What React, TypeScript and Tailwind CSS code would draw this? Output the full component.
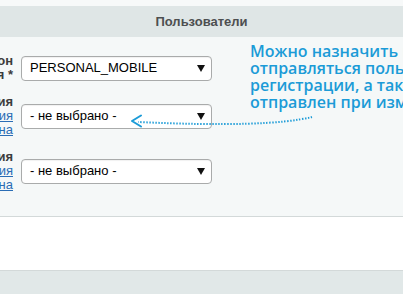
import React from "react";

function Select({ value }: { value: string }) {
  return (
    <div className="flex h-[25px] w-[191px] flex-none items-center justify-between rounded-[4px] border border-[#a9abab] bg-white pl-[8px] pr-[6px] shadow-[inset_0_1px_1px_rgba(0,0,0,0.06)]">
      <span className="text-[13px] text-black">{value}</span>
      <svg width="8" height="7" viewBox="0 0 8 7">
        <path d="M0 0 H8 L4 7 Z" fill="#111" />
      </svg>
    </div>
  );
}

function Label({ lines }: { lines: { t: string; link?: boolean }[] }) {
  return (
    <div className="ml-[-187px] flex w-[200px] flex-none flex-col items-end text-right text-[13px] leading-[14px]">
      {lines.map((l, i) => (
        <span
          key={i}
          className={
            l.link
              ? "whitespace-nowrap text-[#2a6db5] underline"
              : "whitespace-nowrap font-bold text-[#3c3c3c]"
          }
        >
          {l.t}
        </span>
      ))}
    </div>
  );
}

export default function App() {
  return (
    <div
      className="relative flex h-[294px] w-[403px] flex-col overflow-hidden bg-white"
      style={{ fontFamily: '"Liberation Sans", Arial, sans-serif' }}
    >
      <div className="h-[6px] flex-none bg-[#f7f9f9]" />
      <div className="flex h-[31px] flex-none items-center justify-center bg-[#dfe6e6] text-[13px] font-bold text-[#4d4f50]">
        Пользователи
      </div>
      <div className="flex h-[180px] flex-none border-b border-[#d3d9d9] bg-[#f5f8f8]">
        <div className="flex flex-none flex-col gap-[13px] pt-[17px]">
          <div className="flex items-center gap-[8px]">
            <Label lines={[{ t: "Поле телефон" }, { t: "пользователя *" }]} />
            <Select value="PERSONAL_MOBILE" />
          </div>
          <div className="flex items-center gap-[8px]">
            <Label
              lines={[
                { t: "Шаблон при регистрация" },
                { t: "Изменить тип события: регистрация", link: true },
                { t: "Изменить шаблон окна", link: true },
              ]}
            />
            <Select value="- не выбрано -" />
          </div>
          <div className="flex items-center gap-[8px]">
            <Label
              lines={[
                { t: "Шаблон при изменения" },
                { t: "Изменить тип события: изменения", link: true },
                { t: "Изменить шаблон окна", link: true },
              ]}
            />
            <Select value="- не выбрано -" />
          </div>
        </div>
        <div className="ml-[38px] mt-[6px] min-w-0 flex-1 overflow-hidden">
          <div
            className="flex flex-col whitespace-nowrap text-[16px] font-semibold leading-[17px] text-[#1b9bd7]"
            style={{ fontFamily: '"Open Sans", "Noto Sans", sans-serif' }}
          >
            <span>Можно назначить шаблон, который будет</span>
            <span>отправляться пользователю при</span>
            <span>регистрации, а также шаблон, который будет</span>
            <span>отправлен при изменении телефона.</span>
          </div>
        </div>
      </div>
      <div className="h-[54px] flex-none border-b border-[#d3d9d9] bg-white" />
      <div className="flex-1 bg-[#e1e8e8]" />
      <svg
        className="pointer-events-none absolute left-0 top-0"
        width="403"
        height="294"
        viewBox="0 0 403 294"
      >
        <path
          d="M312 117 Q268 128 138 122"
          fill="none"
          stroke="#1b9bd7"
          strokeWidth="2"
          strokeDasharray="1.4 1.6"
        />
        <path
          d="M141 115.5 L132 121 L141 126.5"
          fill="none"
          stroke="#1b9bd7"
          strokeWidth="2"
          strokeLinecap="round"
          strokeLinejoin="round"
        />
      </svg>
    </div>
  );
}
